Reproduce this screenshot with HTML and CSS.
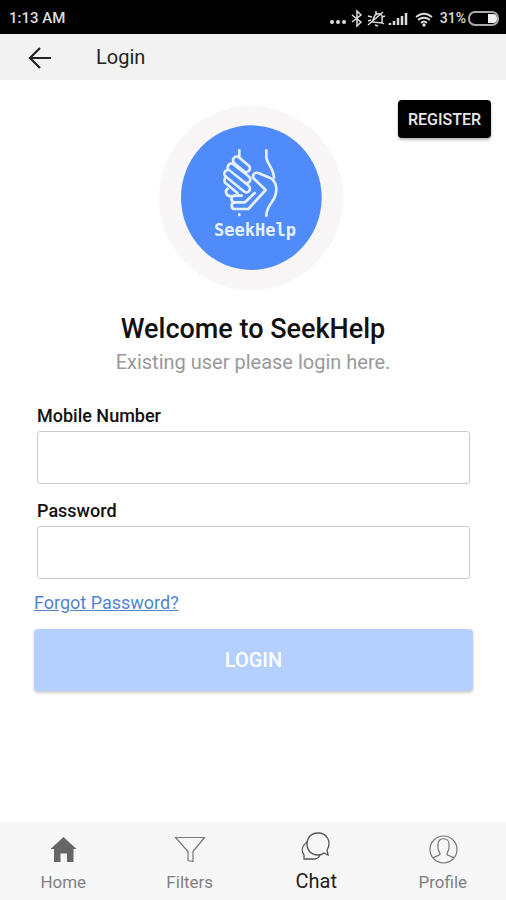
FILE: index.html
```html
<!DOCTYPE html>
<html lang="en">
<head>
  <meta charset="UTF-8">
  <meta name="viewport" content="width=device-width, initial-scale=1.0">
  <link rel="stylesheet" href="styles.css">
  <title>SeekHelp - Login</title>
</head>
<body>
  <div class="status-bar">
    <span>1:13 AM</span>
    <div class="status-icons">
      <svg width="106" height="20" viewBox="0 0 106 20" fill="none" stroke="#ddd" stroke-width="1.5">
        <g fill="#ddd" stroke="none">
          <circle cx="2" cy="14" r="2"/><circle cx="8" cy="14" r="2"/><circle cx="14" cy="14" r="2"/>
        </g>
        <!-- bluetooth -->
        <path d="M22 7l9 7-4 4V3l4 4-9 7"/>
        <!-- muted bell -->
        <path d="M42 14c2-2 1-7 5-8 4-1 6 2 5 5l0 4zM45 17l3 1M38 17L53 4M38 8l4 1M38 13l3-1M52 9l3-1M51 14l3 2M46 6V3"/>
        <!-- signal -->
        <path d="M60 17v-2M64 17v-4M68 17v-7M72 17V8M76 17V5" stroke-width="2.5"/>
        <!-- wifi -->
        <path d="M86 9c5-4 11-4 16 0M88 12c4-3 8-3 12 0M91 15c2-2 4-2 6 0" stroke-width="2"/>
        <circle cx="94" cy="17" r="1" fill="#ddd"/>
      </svg>
      <span class="battery-level">31%</span>
      <svg width="32" height="16" viewBox="0 0 32 16" fill="none" stroke="#aaa" stroke-width="2">
        <rect x="1" y="2" width="29" height="13" rx="6"/>
        <path d="M21 5h4q3 0 3 3.500t-3 3.500h-4z" fill="#eee" stroke="#eee" stroke-width="2"/>
      </svg>
    </div>
  </div>

  <header class="header">
    <a href="#" class="back" aria-label="Back">
      <svg width="24" height="24" viewBox="0 0 24 24" fill="none" stroke="#222" stroke-width="2.2">
        <path d="M23 13H3M12 3L2 13l10 10"/>
      </svg>
    </a>
    <span class="header-title">Login</span>
  </header>

  <main class="content">
    <div class="hero">
      <svg class="logo" viewBox="24 33 552 552" fill="none" stroke="#e6f1ff" stroke-width="8" stroke-linecap="round" stroke-linejoin="round">
        <circle cx="300" cy="309" r="276" fill="#f8f6f7" stroke="none"/>
        <ellipse cx="301" cy="308" rx="211" ry="217" fill="#4f8bfb" stroke="none"/>
        <!-- receiving hand -->
        <path d="M346 166v20c0 18 22 34 23 62"/>
        <path d="M346 362c0-34 30-42 30-78 0-20-8-30-20-36l-34-14c-14-4-22 12-10 20l32 31-52 57h-40c-13 0-13-20 0-20h30l29-28"/>
        <path d="M250 322c-12-3-12-20 2-20h20M241 303c-14 2-22-14-11-22"/>
        <path d="M265 166v22M265 358v2"/>
        <!-- fingers -->
        <path d="M257 196l29 24M241 217l46 36M231 236l55 45M228 258" stroke-width="30"/>
        <path d="M257 196l29 24M241 217l46 36M231 236l55 45" stroke="#4f8bfb" stroke-width="14"/>
        <path d="M222 250c-4 8 0 14 6 18l32 27"/>
        <text class="logo-text" x="312" y="423" text-anchor="middle">SeekHelp</text>
      </svg>
      <button type="button" class="btn-register">REGISTER</button>
    </div>

    <h1>Welcome to SeekHelp</h1>
    <p class="subtitle">Existing user please login here.</p>

    <form class="login-form">
      <div class="field">
        <label for="mobile">Mobile Number</label>
        <input type="tel" id="mobile">
      </div>
      <div class="field">
        <label for="password">Password</label>
        <input type="password" id="password">
      </div>
      <a href="#" class="forgot">Forgot Password?</a>
      <button type="submit" class="btn-login">LOGIN</button>
    </form>
  </main>

  <nav class="tabs">
    <a href="#" class="tab">
      <svg width="32" height="32" viewBox="0 0 32 32" fill="#666">
        <path d="M16.500 3l13 12h-3v13H20v-8.500h-6.500V28H7V15H3.500z"/>
      </svg>
      Home
    </a>
    <a href="#" class="tab">
      <svg width="32" height="32" viewBox="0 0 32 32" fill="none" stroke="#777" stroke-width="1.200">
        <path d="M1.500 3.500h29L19 17.500v10l-5-1v-9z"/>
      </svg>
      Filters
    </a>
    <a href="#" class="tab active">
      <svg width="32" height="32" viewBox="0 0 32 32" fill="none" stroke="#555" stroke-width="1.300">
        <path d="M28 23l-1-5c5-8 0-17-9-17C11 1 7 6 7 12s4 11 11 11c3 0 5-1 6-2z"/>
        <path d="M7 10c-5 4-6 9-3 13v4h11c2 0 4-2 5-4"/>
      </svg>
      Chat
    </a>
    <a href="#" class="tab">
      <svg width="32" height="32" viewBox="0 0 32 32" fill="none" stroke="#777" stroke-width="1.200">
        <circle cx="16.500" cy="15.500" r="13.500"/>
        <path d="M6 24c2-2 7-2 7-4 0-2-2-3-2-6V10c0-7 11-7 11 0v4c0 3-2 4-2 6 0 2 5 2 7 4"/>
      </svg>
      Profile
    </a>
  </nav>
</body>
</html>
```

FILE: styles.css
```css
* {
  box-sizing: border-box;
}

body {
  font-family: Roboto, sans-serif;
  margin: 0;
  min-height: 100vh;
  display: flex;
  flex-direction: column;
  background-color: #fff;
  color: #111;
}

.status-bar {
  display: flex;
  justify-content: space-between;
  align-items: center;
  height: 34px;
  padding: 2px 6px 0 9px;
  background-color: #000;
  color: #ddd;
  font-size: 15px;
  font-weight: 500;
}

.status-icons {
  display: flex;
  align-items: center;
}

.battery-level {
  margin: 0 2px 0 4px;
  font-size: 14px;
}

.header {
  display: flex;
  align-items: center;
  gap: 44px;
  height: 46px;
  padding: 0 28px;
  background-color: #f2f2f2;
}

.back {
  display: flex;
}

.header-title {
  font-size: 20px;
  color: #222;
}

.content {
  flex: 1;
}

.hero {
  display: grid;
  grid-template-columns: 1fr auto 1fr;
  align-items: start;
  padding: 20px 15px 0 10px;
}

.logo {
  grid-column: 2;
  width: 184px;
  margin-top: 6px;
}

.logo-text {
  font-family: "DejaVu Sans Mono", monospace;
  font-size: 51px;
  font-weight: bold;
  fill: #e6f1ff;
  stroke: none;
}

.btn-register {
  justify-self: end;
  height: 38px;
  padding: 0 10px;
  border: none;
  border-radius: 4px;
  background-color: #000;
  color: #e8e8e8;
  font-family: inherit;
  font-size: 16px;
  font-weight: 500;
  box-shadow: 0 2px 3px rgba(0, 0, 0, 0.3);
  cursor: pointer;
}

h1 {
  margin: 23px 0 0;
  text-align: center;
  font-size: 27px;
  line-height: 32px;
  font-weight: 500;
}

.subtitle {
  margin: 5px 0 0;
  text-align: center;
  font-size: 20px;
  line-height: 24px;
  color: #999;
}

.login-form {
  padding: 0 33px 0 34px;
  margin-top: 30px;
}

.field {
  margin: 0 3px 15px;
}

label {
  display: block;
  margin-bottom: 3px;
  font-size: 18px;
  line-height: 24px;
  font-weight: 500;
}

input {
  display: block;
  width: 100%;
  height: 53px;
  padding: 8px 12px;
  border: 1px solid #ccc;
  border-radius: 3px;
  background-color: #fff;
  font-family: inherit;
  font-size: 18px;
}

.forgot {
  display: inline-block;
  font-size: 18px;
  line-height: 18px;
  color: #5084d0;
}

.btn-login {
  display: block;
  width: 100%;
  height: 62px;
  margin-top: 16px;
  border: none;
  border-radius: 4px;
  background-color: #b5d0ff;
  color: #fff;
  font-family: inherit;
  font-size: 20px;
  font-weight: 500;
  box-shadow: 0 2px 3px rgba(0, 0, 0, 0.2);
  cursor: pointer;
}

.tabs {
  display: flex;
  height: 78px;
  background-color: #f7f7f7;
}

.tab {
  flex: 1;
  display: flex;
  flex-direction: column;
  align-items: center;
  gap: 4px;
  padding-top: 12px;
  color: #808080;
  font-size: 17px;
  line-height: 24px;
  text-decoration: none;
}

.tab.active {
  color: #222;
  font-size: 20px;
}

.tab.active svg {
  margin-top: -2px;
  margin-bottom: 1px;
}
```
